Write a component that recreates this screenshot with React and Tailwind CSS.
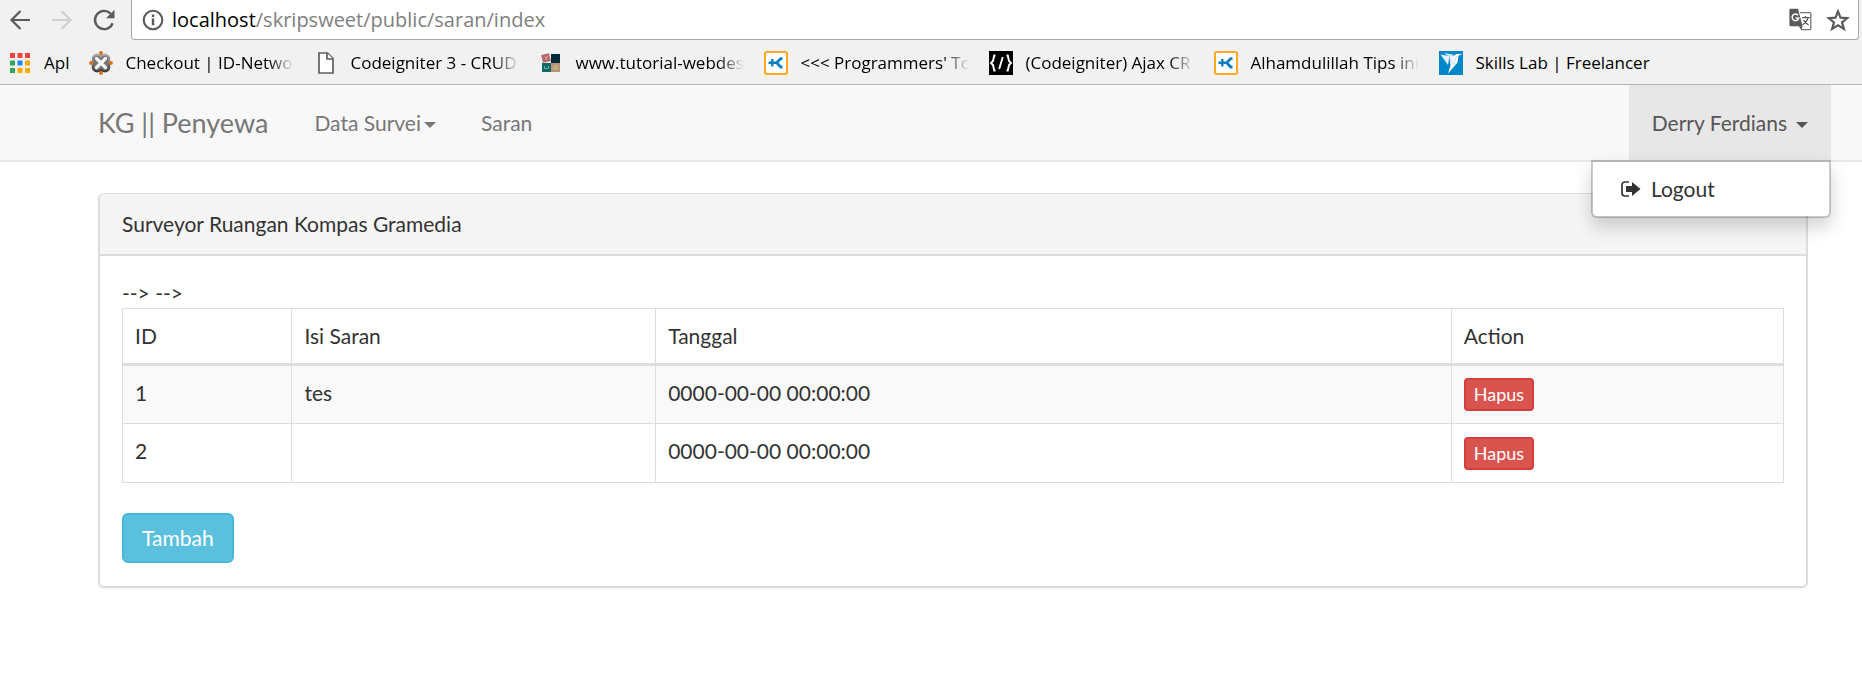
import React from "react";

const browserFont = "font-['Open_Sans','Noto_Sans',sans-serif]";

function BackIcon() {
  return (
    <svg className="h-6 w-6" viewBox="0 0 24 24" fill="none" stroke="currentColor" strokeWidth="2.2">
      <path d="M22 12H4M12.5 3 3.5 12l9 9" />
    </svg>
  );
}

function ForwardIcon() {
  return (
    <svg className="h-6 w-6" viewBox="0 0 24 24" fill="none" stroke="currentColor" strokeWidth="2.2">
      <path d="M2 12h18M11.5 3l9 9-9 9" />
    </svg>
  );
}

function ReloadIcon() {
  return (
    <svg className="h-6 w-6" viewBox="0 0 24 24" fill="none">
      <path d="M20.6 15.2A9.1 9.1 0 1 1 18.6 5.6" stroke="currentColor" strokeWidth="2.4" />
      <path d="M22.5 1.8v8.4h-8.4z" fill="currentColor" />
    </svg>
  );
}

function InfoIcon() {
  return (
    <svg className="h-[22px] w-[22px]" viewBox="0 0 22 22" fill="none">
      <circle cx="11" cy="11" r="9.3" stroke="currentColor" strokeWidth="2.1" />
      <path d="M9.8 9.6h2.4v6.6H9.8zM9.8 5.6h2.4V8H9.8z" fill="currentColor" />
    </svg>
  );
}

function TranslateIcon() {
  return (
    <svg className="h-[23px] w-[23px]" viewBox="0 0 23 23" fill="none">
      <path d="M11 4.6h9.6a1.2 1.2 0 0 1 1.2 1.2v14.6a1.2 1.2 0 0 1-1.2 1.2H12.6L11 18" stroke="#767676" strokeWidth="1.3" />
      <path d="M13.2 9.6h7.4M16.6 8v1.6M19 9.8c-.6 2.6-2.6 5.2-5.4 7M14.4 12c1 1.8 3 3.6 5.2 5" stroke="#5a5a5a" strokeWidth="1.3" />
      <path d="M1.6.8H9l4.6 17.4H1.6A1.2 1.2 0 0 1 .4 17V2A1.2 1.2 0 0 1 1.6.8z" fill="#5a5a5a" />
      <path d="M9.6 18.2h4l-1.2 3.4z" fill="#5a5a5a" />
      <path d="M9 7.2A3.3 3.3 0 1 0 9.7 10H6.6" stroke="#fff" strokeWidth="1.5" />
    </svg>
  );
}

function StarIcon() {
  return (
    <svg className="h-6 w-6" viewBox="0 0 24 24" fill="none" stroke="currentColor" strokeWidth="2.2">
      <path d="M12 3.4l2.500 6.300 6.800.4-5.300 4.200 1.900 6.600L12 17.200l-5.900 3.700L8 14.300 2.700 10.100l6.800-.4z" />
    </svg>
  );
}

function AppsIcon() {
  const colors = ["#f44336", "#f44336", "#f44336", "#34a35b", "#1e88f5", "#fba905", "#34a35b", "#fba905", "#fba905"];
  return (
    <svg className="h-5 w-5" viewBox="0 0 20 20">
      {colors.map((c, i) => (
        <rect key={i} x={(i % 3) * 7.5} y={Math.floor(i / 3) * 7.5} width="5" height="5" fill={c} />
      ))}
    </svg>
  );
}

function IdnIcon() {
  return (
    <svg className="h-6 w-6" viewBox="0 0 24 24" fill="none">
      <defs>
        <linearGradient id="idn" x1="0" y1="0" x2="0" y2="1">
          <stop offset="0" stopColor="#a8a8a8" />
          <stop offset="1" stopColor="#3c3c3c" />
        </linearGradient>
      </defs>
      <path
        d="M12 5.500C13.500 3.500 17 3 19 5s1.500 5.500-.5 7c2 1.500 2.500 5 .5 7s-5.500 1.500-7-.5c-1.500 2-5 2.500-7 .5s-1.500-5.500.5-7C3.500 10.500 3 7 5 5s5.500-1.500 7 .5z"
        fill="#777"
        stroke="url(#idn)"
        strokeWidth="2.200"
        strokeLinejoin="round"
      />
      <path d="M7.500 7.500l9 9M16.500 7.500l-9 9" stroke="#f4f4f4" strokeWidth="3.200" strokeLinecap="round" />
      <g fill="#d9720f">
        <circle cx="12" cy="2.100" r="2" />
        <circle cx="12" cy="21.900" r="2" />
        <circle cx="2.100" cy="12" r="2" />
        <circle cx="21.900" cy="12" r="2" />
      </g>
    </svg>
  );
}

function PageIcon() {
  return (
    <svg className="h-6 w-6" viewBox="0 0 24 24" fill="#fff" stroke="#5f5f5f" strokeWidth="1.700">
      <path d="M5 2h8.500l5.500 5.500V22H5z" />
      <path d="M13 2v6h6" />
    </svg>
  );
}

function TilesIcon() {
  return (
    <svg className="h-6 w-6" viewBox="0 0 24 24">
      <rect x="3" y="3" width="8" height="8" fill="#b5696c" transform="rotate(-14 7 7)" />
      <rect x="12" y="3" width="9" height="9" fill="#022b3a" />
      <rect x="3" y="12" width="9" height="9" fill="#126a68" />
      <rect x="12" y="12" width="9" height="9" fill="#b89673" />
      <path d="M5.500 15v2.500h4V15" fill="none" stroke="#6fb0aa" />
      <circle cx="16.500" cy="16.500" r="1.800" fill="none" stroke="#dcc7ae" />
      <path d="M5.500 5.500l3 3M8.500 5l-2 4" stroke="#d9a9aa" />
    </svg>
  );
}

function KIcon() {
  return (
    <svg className="h-6 w-6" viewBox="0 0 24 24" fill="none">
      <rect x="1" y="1" width="22" height="22" rx="1.500" fill="#fff" stroke="#fba91e" strokeWidth="2" />
      <path d="M4.500 11.800h9M8.300 8v7.600" stroke="#0f7fc4" strokeWidth="2.400" />
      <path d="M18.500 7.600h-1.800l-4 4.200 4 4.200h1.800" stroke="#0f7fc4" strokeWidth="2.800" />
    </svg>
  );
}

function CodeIcon() {
  return (
    <svg className="h-6 w-6" viewBox="0 0 24 24" fill="none" stroke="#fff" strokeWidth="1.900">
      <rect width="24" height="24" fill="#000" stroke="none" />
      <path d="M6.500 4.500H5.200L4 10l-2 2 2 2 1.200 5.500h1.300M17.500 4.500h1.300L20 10l2 2-2 2-1.200 5.500h-1.300M13.800 6l-3.600 12" />
    </svg>
  );
}

function BirdIcon() {
  return (
    <svg className="h-6 w-6" viewBox="0 0 24 24">
      <rect width="24" height="24" fill="#0087ca" />
      <path d="M1.500 3.500l9 1.500-1.500 9z" fill="#e4f2fa" />
      <path d="M5 2l9.500 1.500L12 7z" fill="#c7e4f4" />
      <path d="M10.500 6.500L18 3l5.500-.3-4 2-1 6.800L9 22.500l2.500-8z" fill="#fff" />
      <path d="M10.500 6.500l3.500 6.800L18 5" fill="none" stroke="#8fc9e8" strokeWidth=".6" />
    </svg>
  );
}

const bookmarks = [
  { label: "Checkout | ID-Networ", Icon: IdnIcon, fade: true },
  { label: "Codeigniter 3 - CRUD", Icon: PageIcon, fade: true },
  { label: "www.tutorial-webdesi", Icon: TilesIcon, fade: true },
  { label: "<<< Programmers' To", Icon: KIcon, fade: true },
  { label: "(Codeigniter) Ajax CR", Icon: CodeIcon, fade: true },
  { label: "Alhamdulillah Tips ini", Icon: KIcon, fade: true },
  { label: "Skills Lab | Freelancer", Icon: BirdIcon, fade: false },
];

function BrowserChrome() {
  return (
    <header className={`${browserFont} border-b border-[#b3b3b3] bg-[#f1f1f1]`}>
      <div className="flex h-10 pr-[3px] text-[#5a5a5a]">
        <div className="flex w-[131px] items-center gap-[18px] pl-2">
          <button aria-label="Back"><BackIcon /></button>
          <button aria-label="Forward" className="text-[#d0d0d0]"><ForwardIcon /></button>
          <button aria-label="Reload"><ReloadIcon /></button>
        </div>
        <div className="flex flex-1 items-center rounded-b-[4px] border border-t-0 border-[#a6a6a6] bg-white px-2 pl-[10px]">
          <InfoIcon />
          <div className="ml-2 flex-1 text-[20px] leading-6 text-[#808080]">
            <span className="text-black">localhost</span>/skripsweet/public/saran/index
          </div>
          <button aria-label="Translate this page"><TranslateIcon /></button>
          <button aria-label="Bookmark this page" className="ml-[14px]"><StarIcon /></button>
        </div>
      </div>
      <nav aria-label="Bookmarks" className="flex h-11 items-center gap-5 pt-0.5 pl-[10px] text-[17px] leading-6 text-black">
        <a href="#apps" className="flex items-center gap-[14px]">
          <AppsIcon />
          <span>Apl</span>
        </a>
        {bookmarks.map(({ label, Icon, fade }) => (
          <a key={label} href="#bookmark" className="flex items-center gap-3">
            <span className="shrink-0"><Icon /></span>
            <span
              className={
                fade
                  ? "w-[169px] whitespace-nowrap [mask-image:linear-gradient(to_right,black_85%,transparent)]"
                  : "whitespace-nowrap"
              }
            >
              {label}
            </span>
          </a>
        ))}
      </nav>
    </header>
  );
}

function Caret() {
  return <span className="mt-1 inline-block border-x-[6px] border-t-[6px] border-x-transparent border-t-current" />;
}

function LogoutIcon() {
  return (
    <svg className="h-4 w-5" viewBox="0 0 20 16">
      <path d="M8 1H4a3 3 0 0 0-3 3v8a3 3 0 0 0 3 3h4" fill="none" stroke="#333" strokeWidth="1.700" />
      <path d="M5 5h6V1l8.500 7L11 15v-4H5z" fill="#333" />
    </svg>
  );
}

function Navbar() {
  return (
    <nav className="flex border-b-2 border-[#e7e7e7] bg-[#f8f8f8] pr-[31px] pl-[98px] text-[21px] leading-[29px] text-[#777]">
      <a href="#home" className="py-[23px] text-[27px]">KG || Penyewa</a>
      <button className="ml-[23px] flex items-center gap-[3px] px-[23px]">Data Survei<Caret /></button>
      <a href="#saran" className="px-[22px] py-[23px]">Saran</a>
      <div className="relative ml-auto flex">
        <button aria-expanded="true" className="flex items-center gap-[9px] bg-[#e7e7e7] px-[23px] text-[#555]">
          Derry Ferdians <Caret />
        </button>
        <div className="absolute top-full right-0 w-60 rounded-b-[6px] border-2 border-black/20 bg-white bg-clip-padding py-3 shadow-[0_9px_18px_rgba(0,0,0,0.175)]">
          <a href="#logout" className="flex items-center gap-[10px] px-7 leading-[30px] text-[#333]">
            <LogoutIcon />
            Logout
          </a>
        </div>
      </div>
    </nav>
  );
}

const rows = [
  { id: 1, isi: "tes", tanggal: "0000-00-00 00:00:00" },
  { id: 2, isi: "", tanggal: "0000-00-00 00:00:00" },
];

const cell = "border border-[#ddd] p-3 text-left font-normal";

export default function App() {
  return (
    <div className="min-h-screen bg-white font-['Lato',sans-serif] text-[21px] leading-[30px] text-[#333]">
      <BrowserChrome />
      <Navbar />
      <main className="pt-[31px] pr-[54px] pl-[98px]">
        <section className="rounded-[6px] border-2 border-t border-[#ddd] shadow-[0_1px_2px_rgba(0,0,0,0.05)]">
          <h1 className="rounded-t-[4px] border-b-2 border-[#ddd] bg-[#f5f5f5] px-[22px] py-[15px]">
            Surveyor Ruangan Kompas Gramedia
          </h1>
          <div className="px-[22px] pt-[22px] pb-[23px]">
            <p>{"--> -->"}</p>
            <table className="w-full table-fixed border-collapse">
              <thead>
                <tr>
                  <th className={`${cell} w-[10.2%] border-b-[3px]`}>ID</th>
                  <th className={`${cell} w-[21.9%] border-b-[3px]`}>Isi Saran</th>
                  <th className={`${cell} w-[47.9%] border-b-[3px]`}>Tanggal</th>
                  <th className={`${cell} border-b-[3px]`}>Action</th>
                </tr>
              </thead>
              <tbody>
                {rows.map((r) => (
                  <tr key={r.id} className="h-[59px] odd:bg-[#f9f9f9]">
                    <td className={`${cell} align-top`}>{r.id}</td>
                    <td className={`${cell} align-top`}>{r.isi}</td>
                    <td className={`${cell} align-top`}>{r.tanggal}</td>
                    <td className={`${cell} align-middle`}>
                      <button className="block rounded-[4px] border-2 border-[#d43f3a] bg-[#d9534f] px-2 text-[18px] leading-[29px] text-white">
                        Hapus
                      </button>
                    </td>
                  </tr>
                ))}
              </tbody>
            </table>
            <button className="mt-[30px] block rounded-[6px] border-2 border-[#46b8da] bg-[#5bc0de] px-[18px] py-[8px] text-white">
              Tambah
            </button>
          </div>
        </section>
      </main>
    </div>
  );
}
